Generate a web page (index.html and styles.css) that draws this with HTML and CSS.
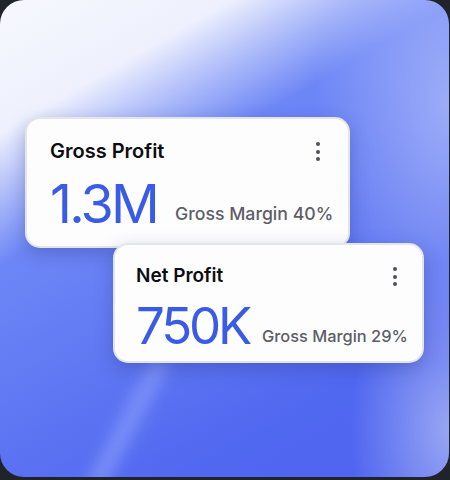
FILE: index.html
```html
<!DOCTYPE html>
<html lang="en">
<head>
  <meta charset="UTF-8" />
  <meta name="viewport" content="width=device-width, initial-scale=1.0"/>
  <title>Profit cards</title>
  <link rel="stylesheet" href="styles.css">
</head>
<body>

  <div class="panel">

    <!-- Gross profit -->
    <div class="card card-gross">
      <div class="card-head">
        <h3 class="card-title">Gross Profit</h3>
        <span class="more"><i></i><i></i><i></i></span>
      </div>
      <div class="card-body">
        <span class="amount">1.3M</span>
        <span class="margin">Gross Margin 40%</span>
      </div>
    </div>

    <!-- Net profit -->
    <div class="card card-net">
      <div class="card-head">
        <h3 class="card-title">Net Profit</h3>
        <span class="more"><i></i><i></i><i></i></span>
      </div>
      <div class="card-body">
        <span class="amount">750K</span>
        <span class="margin">Gross Margin 29%</span>
      </div>
    </div>

  </div>

</body>
</html>
```

FILE: styles.css
```css
* {
  box-sizing: border-box;
  margin: 0;
  padding: 0;
}

body {
  background-color: #21232b;
  font-family: 'Inter', 'Noto Sans', sans-serif;
  width: 450px;
  height: 480px;
  overflow: hidden;
}

.panel {
  position: relative;
  width: 449px;
  height: 477px;
  border-radius: 24px;
  overflow: hidden;
  display: flex;
  flex-direction: column;
  align-items: flex-start;
  padding-top: 117px;
  background:
    radial-gradient(30% 55% at 100% 22%, rgba(175, 188, 250, 0.75), rgba(175, 188, 250, 0) 100%),
    radial-gradient(22% 35% at 100% 90%, rgba(170, 182, 245, 0.8), rgba(170, 182, 245, 0) 100%),
    linear-gradient(150deg, #f7f8fe 0%, #eef1fd 18%, #b3c0fa 26%, #6e87f6 36%, #6179f3 55%, #5067f0 80%, #4f64ef 100%);
}

/* soft light streak near the bottom */
.panel::before {
  content: "";
  position: absolute;
  left: 105px;
  top: 350px;
  width: 34px;
  height: 170px;
  background: linear-gradient(90deg, rgba(140, 160, 252, 0), rgba(140, 160, 252, 0.7), rgba(140, 160, 252, 0));
  transform: rotate(28deg);
  filter: blur(6px);
}

/* Cards */
.card {
  position: relative;
  background-color: #fdfdfe;
  border: 2px solid #e4e5ea;
  border-radius: 15px;
  box-shadow: 0 6px 18px rgba(35, 45, 120, 0.28);
}

.card-gross {
  width: 325px;
  height: 131px;
  margin-left: 25px;
  padding: 20px 28px 0 23px;
}

.card-net {
  width: 311px;
  height: 120px;
  margin-left: 113px;
  margin-top: -5px;
  padding: 19px 25px 0 21px;
}

.card-head {
  display: flex;
  justify-content: space-between;
  align-items: center;
}

.card-title {
  font-size: 20px;
  line-height: 24px;
  font-weight: 600;
  color: #0d0d12;
}

.card-net .card-title {
  font-size: 19px;
}

.more {
  display: flex;
  flex-direction: column;
  gap: 3.5px;
  padding-top: 1px;
}

.more i {
  display: block;
  width: 4px;
  height: 4px;
  border-radius: 50%;
  background-color: #505159;
}

.card-body {
  display: flex;
  align-items: flex-end;
  margin-top: 13px;
  white-space: nowrap;
}

.card-net .card-body {
  margin-top: 12px;
}

.amount {
  font-size: 54px;
  line-height: 55px;
  font-weight: 400;
  letter-spacing: -2.8px;
  color: #3a5be6;
}

.card-net .amount {
  font-size: 51px;
  line-height: 52px;
  letter-spacing: -3.2px;
}

.margin {
  font-size: 17.7px;
  line-height: 20px;
  font-weight: 500;
  color: #5d5e66;
  margin-left: 18px;
  margin-bottom: 7px;
}

.card-net .margin {
  font-size: 16.4px;
  margin-left: 13px;
  margin-bottom: 6px;
}
```
